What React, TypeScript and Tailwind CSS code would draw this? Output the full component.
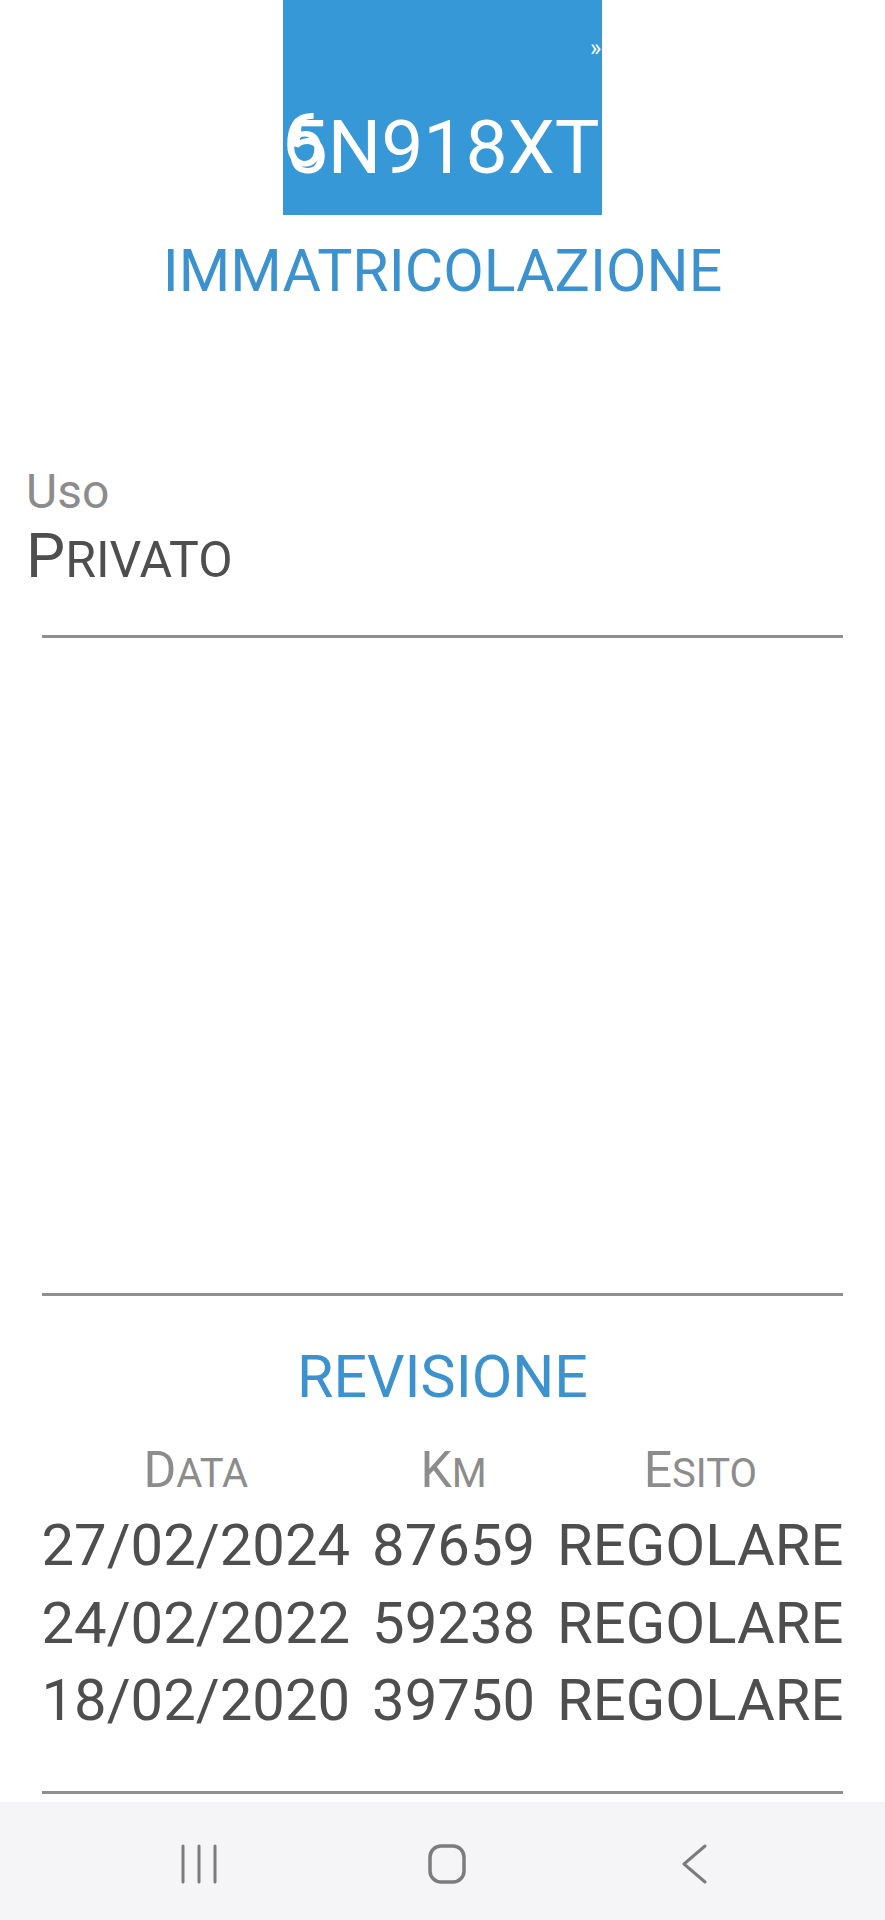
import React from "react";

// first letter full size, the rest as smaller capitals
function SmallCaps({ text, big, small }: { text: string; big: string; small: string }) {
  return (
    <span className={big}>
      {text[0]}
      <span className={small}>{text.slice(1).toUpperCase()}</span>
    </span>
  );
}

const revisioni = [
  { data: "27/02/2024", km: "87659", esito: "REGOLARE" },
  { data: "24/02/2022", km: "59238", esito: "REGOLARE" },
  { data: "18/02/2020", km: "39750", esito: "REGOLARE" },
];

export default function App() {
  return (
    <div className="min-h-screen w-full bg-white font-['Roboto','Noto_Sans',sans-serif] flex flex-col">
      {/* Targa */}
      <div className="flex justify-center">
        <div className="relative w-[319px] h-[215px] bg-[#3798d8] overflow-hidden flex justify-center pt-[110px]">
          <span className="absolute left-[307px] top-[36px] text-[24px] leading-none text-white">»</span>
          <span className="text-[75px] leading-none text-white whitespace-nowrap">
            <span className="relative">
              5<span className="absolute left-[-3px] top-0">6</span>
            </span>
            N918XT
          </span>
        </div>
      </div>

      <h1 className="mt-[26px] text-center text-[59px] leading-none text-[#3b92cf]">
        IMMATRICOLAZIONE
      </h1>

      {/* Uso */}
      <div className="mt-[168px] pl-[26px]">
        <p className="text-[48px] leading-none text-[#8c8c8c]">Uso</p>
        <p className="mt-[9px] text-[62px] leading-none text-[#4e4e4e]">
          <SmallCaps text="Privato" big="text-[62px]" small="text-[50px]" />
        </p>
      </div>

      <div className="mt-[48px] mx-[42px] h-[3px] bg-[#8f8f8f]" />

      <div className="mt-[655px] mx-[42px] h-[3px] bg-[#8f8f8f]" />

      {/* Revisione */}
      <h2 className="mt-[51px] text-center text-[59px] leading-none text-[#3b92cf]">
        REVISIONE
      </h2>

      <div className="mt-[39px] grid grid-cols-[auto_auto_auto] justify-center gap-x-[22px]">
        {["Data", "Km", "Esito"].map((h) => (
          <div key={h} className="text-center text-[50px] leading-none text-[#8c8c8c] pb-[12px]">
            <SmallCaps text={h} big="text-[50px]" small="text-[40px]" />
          </div>
        ))}
        {revisioni.map((r) => (
          <React.Fragment key={r.data}>
            <div className="text-[58px] leading-[77.5px] text-[#4e4e4e]">{r.data}</div>
            <div className="text-[58px] leading-[77.5px] text-[#4e4e4e]">{r.km}</div>
            <div className="text-[58px] leading-[77.5px] text-[#4e4e4e]">{r.esito}</div>
          </React.Fragment>
        ))}
      </div>

      <div className="mt-[51px] mx-[42px] h-[3px] bg-[#8f8f8f]" />

      {/* Barra di navigazione */}
      <div className="mt-[8px] h-[118px] bg-[#f5f5f7] flex items-center justify-center gap-[208px] pl-[9px] pt-[6px]">
        <svg width="40" height="40" viewBox="0 0 40 40" fill="none" stroke="#7c7c7c" strokeWidth="3" strokeLinecap="round">
          <line x1="4" y1="2" x2="4" y2="38" />
          <line x1="20" y1="2" x2="20" y2="38" />
          <line x1="36" y1="2" x2="36" y2="38" />
        </svg>
        <svg width="40" height="40" viewBox="0 0 40 40" fill="none" stroke="#7c7c7c" strokeWidth="3.5">
          <rect x="3" y="2" width="34" height="36" rx="11" />
        </svg>
        <svg width="40" height="40" viewBox="0 0 40 40" fill="none" stroke="#7c7c7c" strokeWidth="3" strokeLinecap="round" strokeLinejoin="round">
          <polyline points="30,2 9,20 30,38" />
        </svg>
      </div>
    </div>
  );
}
